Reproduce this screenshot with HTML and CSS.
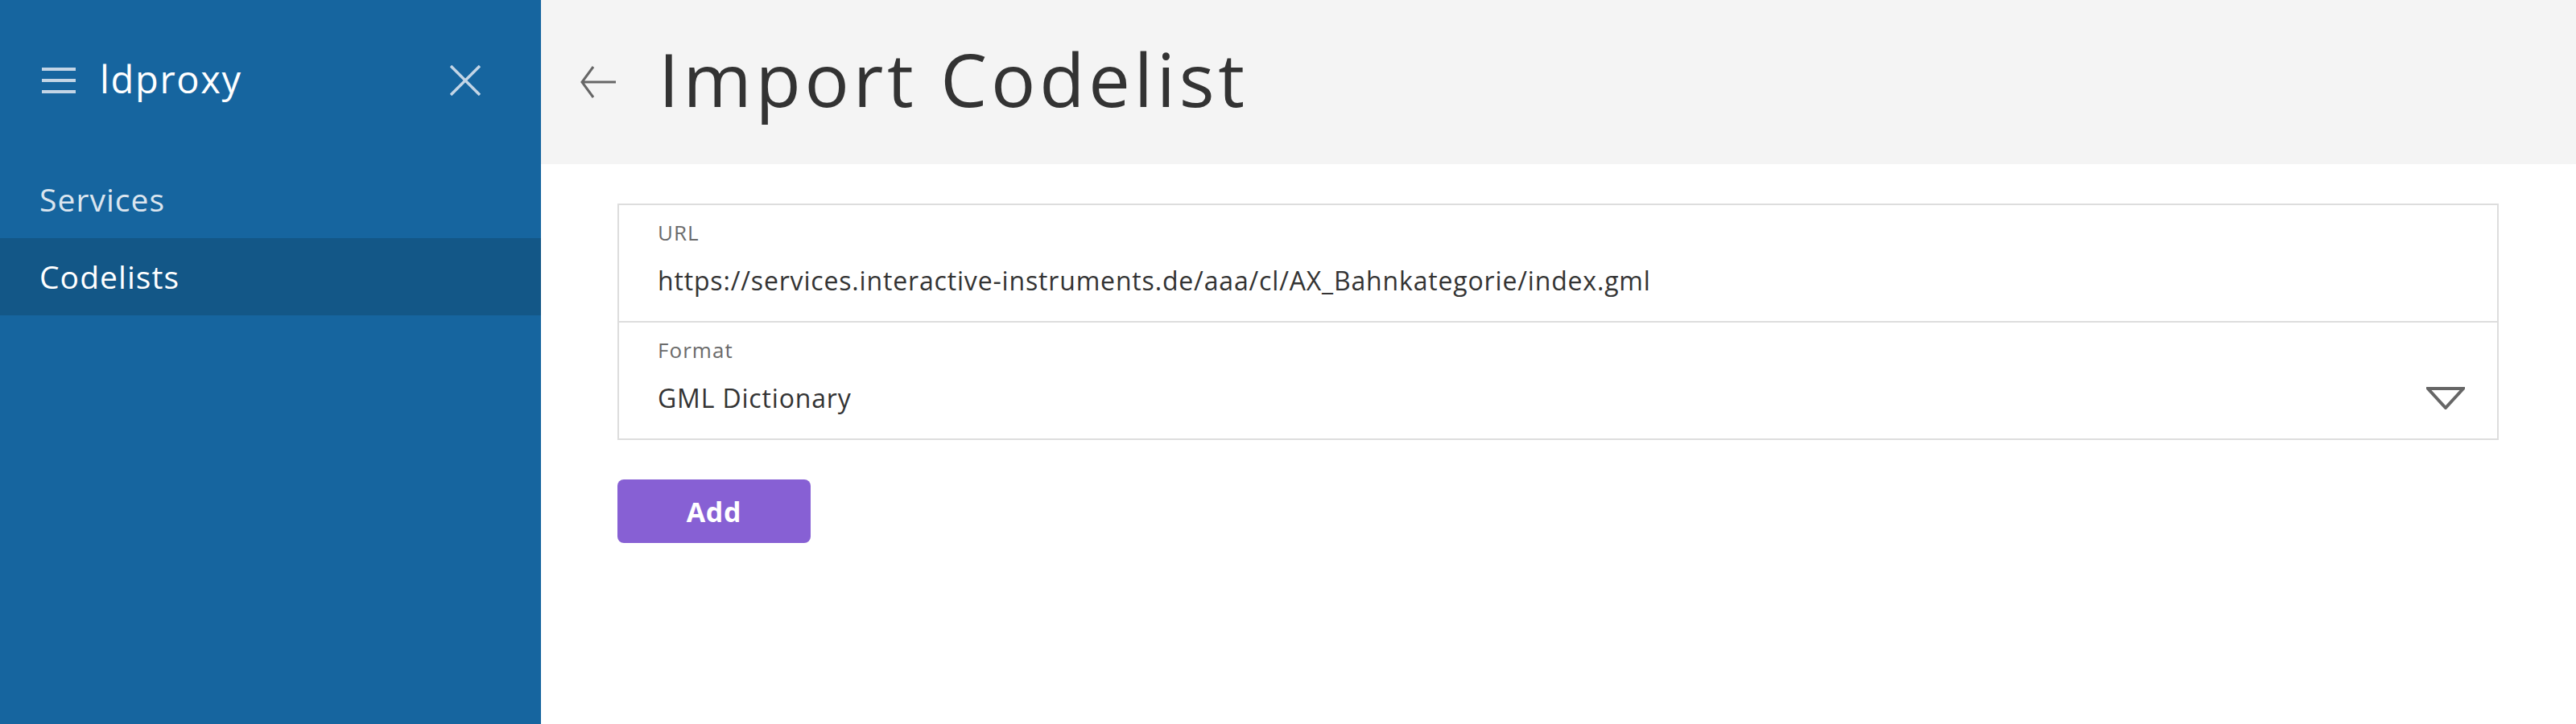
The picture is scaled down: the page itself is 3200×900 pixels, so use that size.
FILE: index.html
```html
<!DOCTYPE html>
<html lang="en">
<head>
<meta charset="utf-8">
<title>Import Codelist - ldproxy</title>
<link rel="stylesheet" href="styles.css">
</head>
<body>
<div class="app">
  <aside class="sidebar">
    <div class="brand">
      <div class="brand-left">
        <svg class="hamburger" width="42" height="32" viewBox="0 0 42 32" aria-hidden="true">
          <rect x="0" y="0" width="42" height="4"/>
          <rect x="0" y="14" width="42" height="4"/>
          <rect x="0" y="28" width="42" height="4"/>
        </svg>
        <span class="brand-name">ldproxy</span>
      </div>
      <svg class="close" width="38" height="38" viewBox="0 0 38 38" aria-hidden="true">
        <path d="M1 1 L37 37 M37 1 L1 37"/>
      </svg>
    </div>
    <nav class="nav">
      <a class="nav-item">Services</a>
      <a class="nav-item active">Codelists</a>
    </nav>
  </aside>
  <main class="main">
    <header class="page-header">
      <svg class="back" width="44" height="40" viewBox="0 0 44 40" aria-hidden="true">
        <path d="M44 20 H2 M16 1 L2 20 L16 39"/>
      </svg>
      <h1 class="title">Import Codelist</h1>
    </header>
    <section class="content">
      <div class="form">
        <div class="field">
          <div class="label">URL</div>
          <div class="value">https://services.interactive-instruments.de/aaa/cl/AX_Bahnkategorie/index.gml</div>
        </div>
        <div class="field">
          <div class="label">Format</div>
          <div class="value select">
            <span>GML Dictionary</span>
            <svg class="caret" width="48" height="28" viewBox="0 0 48 28" aria-hidden="true">
              <path d="M2 2 H46 L24 26 Z"/>
            </svg>
          </div>
        </div>
      </div>
      <button class="btn">Add</button>
    </section>
  </main>
</div>
</body>
</html>
```

FILE: styles.css
```css
html, body {
  margin: 0;
  padding: 0;
  height: 100%;
}

body {
  font-family: "Open Sans", "Noto Sans", sans-serif;
  color: #333333;
  background: #ffffff;
  letter-spacing: 0.03em;
}

.app {
  display: flex;
  height: 900px;
}

.sidebar {
  width: 672px;
  flex: 0 0 672px;
  background: #16659f;
  display: flex;
  flex-direction: column;
}

.brand {
  height: 200px;
  display: flex;
  align-items: center;
  justify-content: space-between;
  padding: 0 75px 0 52px;
}

.brand-left {
  display: flex;
  align-items: center;
  gap: 30px;
}

.hamburger rect {
  fill: #c3d5e6;
}

.brand-name {
  color: #ffffff;
  font-size: 47px;
  line-height: 1;
  letter-spacing: 0.036em;
  padding-bottom: 4px;
}

.close path {
  stroke: #c3d5e6;
  stroke-width: 3.5;
  fill: none;
}

.nav {
  display: flex;
  flex-direction: column;
}

.nav-item {
  height: 96px;
  display: flex;
  align-items: center;
  padding-left: 49px;
  padding-bottom: 2px;
  box-sizing: border-box;
  font-size: 39px;
  letter-spacing: 0.027em;
  color: #dbe5ef;
  cursor: pointer;
}

.nav-item.active {
  background: #135787;
  color: #ffffff;
}

.main {
  flex: 1;
  display: flex;
  flex-direction: column;
}

.page-header {
  height: 204px;
  box-sizing: border-box;
  background: #f4f4f4;
  display: flex;
  align-items: center;
  padding-left: 49px;
  gap: 53px;
}

.back path {
  stroke: #666666;
  stroke-width: 3;
  fill: none;
  stroke-linejoin: miter;
}

.title {
  margin: 0 0 8px;
  font-size: 92px;
  font-weight: 400;
  line-height: 1;
  letter-spacing: 0.052em;
  color: #333333;
}

.content {
  padding: 49px 96px 0 95px;
  display: flex;
  flex-direction: column;
  align-items: flex-start;
}

.form {
  align-self: stretch;
  border: 2px solid #dddddd;
}

.field {
  padding: 14px 40px 26px 48px;
}

.field + .field {
  border-top: 2px solid #dddddd;
}

.label {
  font-size: 26px;
  line-height: 40px;
  letter-spacing: 0.04em;
  color: #6b6b6b;
}

.value {
  margin-top: 16px;
  font-size: 32px;
  line-height: 48px;
  letter-spacing: 0.026em;
  color: #333333;
}

.select {
  display: flex;
  align-items: center;
  justify-content: space-between;
}

.caret path {
  stroke: #666666;
  stroke-width: 4;
  fill: none;
  stroke-linejoin: miter;
}

.btn {
  margin-top: 49px;
  width: 240px;
  height: 79px;
  border: none;
  border-radius: 8px;
  background: #8760d4;
  color: #ffffff;
  font-family: "Open Sans", "Noto Sans", sans-serif;
  font-weight: 700;
  font-size: 34px;
  letter-spacing: 0.02em;
  cursor: pointer;
}
```
